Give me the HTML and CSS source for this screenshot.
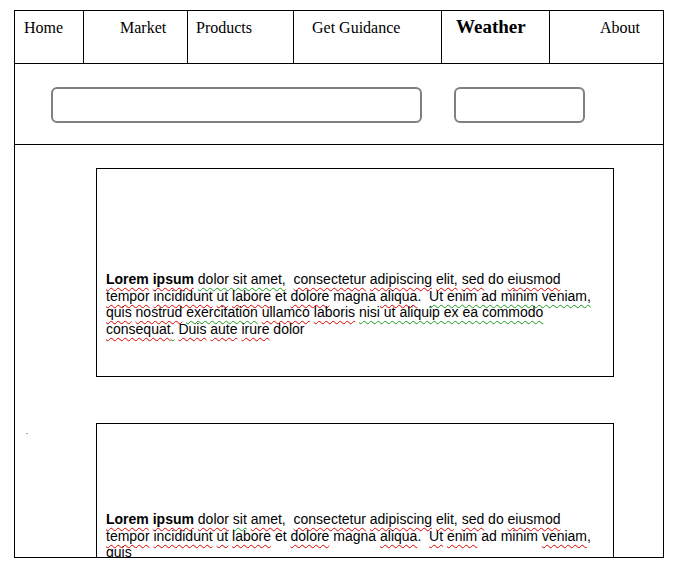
FILE: index.html
```html
<!DOCTYPE html>
<html>
<head>
<meta charset="utf-8">
<link rel="stylesheet" href="styles.css">
</head>
<body>
<div class="frame">
  <nav class="nav">
    <div class="cell c1">Home</div>
    <div class="cell c2">Market</div>
    <div class="cell c3">Products</div>
    <div class="cell c4">Get Guidance</div>
    <div class="cell c5 weather">Weather</div>
    <div class="cell c6">About</div>
  </nav>
  <div class="searchrow">
    <div class="box search"></div>
    <div class="box btn"></div>
  </div>
  <div class="content">
    <div class="row">
      <div class="card card1">
        <p class="txt"><b class="r">Lorem</b> <b class="r">ipsum</b> <span class="g">dolor sit amet,</span>&nbsp; <span class="r">consectetur</span> <span class="r">adipiscing</span> <span class="r">elit,</span> <span class="r">sed</span> do <span class="r">eiusmod</span><br><span class="r">tempor</span> <span class="r">incididunt</span> <span class="r">ut</span> <span class="r">labore</span> et <span class="r">dolore</span> magna <span class="r">aliqua</span>.&nbsp; <span class="g">Ut enim ad minim veniam,</span><br><span class="r">quis</span> <span class="r">nostrud</span> <span class="g">exercitation</span> <span class="r">ullamco</span> <span class="r">laboris</span> <span class="g">nisi ut aliquip ex ea commodo</span><br><span class="r">consequat</span><span class="g">.</span> <span class="r">Duis</span> <span class="r">aute</span> <span class="r">irure</span> dolor</p>
      </div>
    </div>
    <div class="row row2">
      <div class="dot"></div>
      <div class="card card2">
        <p class="txt"><b class="r">Lorem</b> <b class="r">ipsum</b> <span class="r">dolor</span> <span class="g">sit</span> <span class="r">amet</span>,&nbsp; <span class="r">consectetur</span> <span class="r">adipiscing</span> <span class="r">elit</span>, <span class="r">sed</span> do <span class="r">eiusmod</span><br><span class="r">tempor</span> <span class="r">incididunt</span> <span class="r">ut</span> <span class="r">labore</span> et <span class="r">dolore</span> magna <span class="r">aliqua</span>.&nbsp; <span class="r">Ut</span> <span class="r">enim</span> ad minim <span class="r">veniam</span>,<br><span class="r">quis</span></p>
      </div>
    </div>
  </div>
</div>
</body>
</html>
```
FILE: styles.css
```css
html, body {
  margin: 0;
  padding: 0;
  background: #fff;
}

.frame {
  margin: 10px 0 0 14px;
  width: 650px;
  height: 548px;
  box-sizing: border-box;
  border: 1px solid #000;
  overflow: hidden;
}

.nav {
  display: flex;
  height: 53px;
  box-sizing: border-box;
  border-bottom: 1px solid #000;
  font-family: "Liberation Serif", "Times New Roman", serif;
  font-size: 16px;
  color: #000;
}

.cell {
  box-sizing: border-box;
  border-right: 1px solid #000;
  padding-top: 8px;
  line-height: normal;
  white-space: nowrap;
}

.c1 { width: 69px; padding-left: 9px; }
.c2 { width: 104px; padding-left: 36px; }
.c3 { width: 106px; padding-left: 8px; }
.c4 { width: 148px; padding-left: 18px; }
.c5 { width: 108px; padding-left: 14px; }
.c6 { flex: 1; padding-left: 50px; border-right: none; }

.weather {
  font-weight: bold;
  font-size: 19px;
  padding-top: 5px;
}

.searchrow {
  display: flex;
  height: 81px;
  box-sizing: border-box;
  border-bottom: 1px solid #000;
  padding: 23px 0 0 36px;
  gap: 32px;
}

.box {
  box-sizing: border-box;
  height: 36px;
  border: 2px solid #808080;
  border-radius: 6px;
}

.search { width: 371px; }
.btn { width: 131px; }

.content {
  padding-top: 23px;
  display: flex;
  flex-direction: column;
  gap: 46px;
}

.row {
  display: flex;
  padding-left: 81px;
}

.row2 {
  padding-left: 11px;
}

.dot {
  width: 2px;
  height: 1px;
  background: #aaa;
  margin-top: 10px;
  margin-right: 68px;
}

.card {
  width: 518px;
  box-sizing: border-box;
  border: 1px solid #000;
  padding: 0 0 0 9px;
}

.card1 {
  height: 209px;
  padding-top: 102px;
}

.card2 {
  height: 220px;
  padding-top: 87px;
}

.txt {
  margin: 0;
  font-family: "Liberation Sans", Arial, sans-serif;
  font-size: 14px;
  line-height: 16.7px;
  color: #000;
  white-space: nowrap;
}

.r, .g {
  text-decoration-line: underline;
  text-decoration-style: wavy;
  text-decoration-thickness: 1px;
  text-underline-offset: 3px;
}

.r { text-decoration-color: #e00000; }
.g { text-decoration-color: #1a9a1a; }
```
